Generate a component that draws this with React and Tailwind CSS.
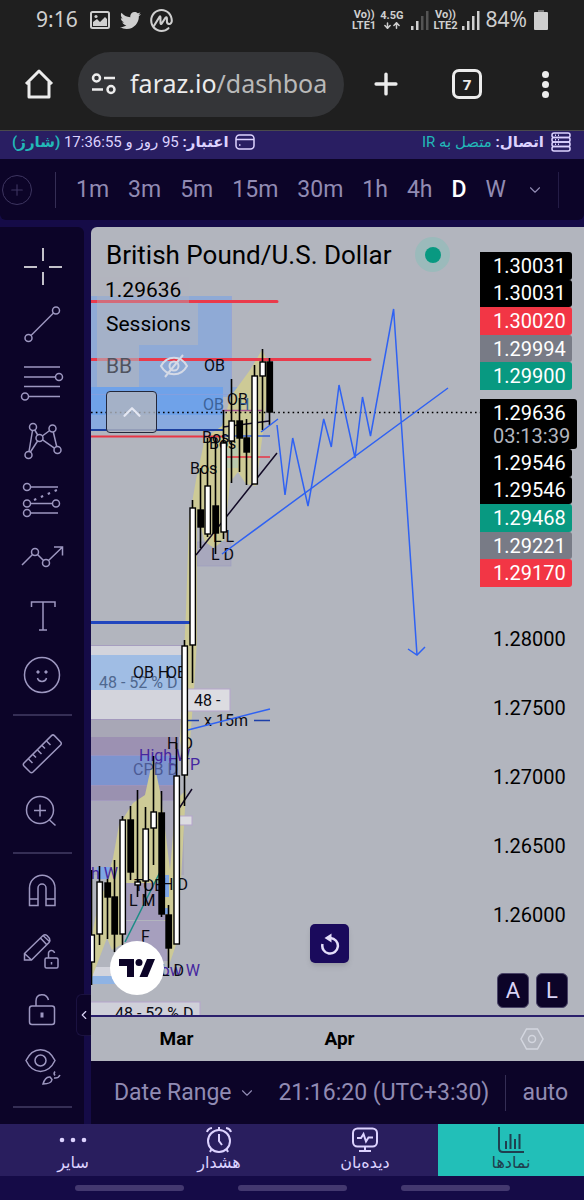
import {
  ArrowDown,
  ArrowUp,
  ChevronDown,
  ChevronLeft,
  ChevronUp,
  Plus,
} from "lucide-react";
import { FaTwitter } from "react-icons/fa";
import { SiCoinmarketcap } from "react-icons/si";

const intervals = ["1m", "3m", "5m", "15m", "30m", "1h", "4h", "D", "W"];

const upperLabels = [
  { price: "1.30031", color: "bg-black" },
  { price: "1.30031", color: "bg-black" },
  { price: "1.30020", color: "bg-[#f23645]" },
  { price: "1.29994", color: "bg-[#787b86]" },
  { price: "1.29900", color: "bg-[#089981]" },
];

const lowerLabels = [
  { price: "1.29546", color: "bg-black" },
  { price: "1.29546", color: "bg-black" },
  { price: "1.29468", color: "bg-[#089981]" },
  { price: "1.29221", color: "bg-[#787b86]" },
  { price: "1.29170", color: "bg-[#f23645]" },
];

const ticks = ["1.28000", "1.27500", "1.27000", "1.26500", "1.26000"];

// x, high, low, body top, body bottom, bullish
const candles = [
  [91, 870, 985, 935, 962, true],
  [99, 866, 945, 882, 934, true],
  [107, 879, 939, 883, 897, false],
  [114, 860, 952, 897, 934, false],
  [122, 816, 945, 820, 934, true],
  [130, 806, 880, 820, 872, false],
  [137, 790, 897, 882, 885, true],
  [145, 807, 906, 829, 881, true],
  [153, 756, 865, 812, 828, true],
  [161, 791, 917, 813, 914, false],
  [168, 905, 968, 915, 948, false],
  [176, 743, 944, 776, 944, true],
  [184, 640, 806, 646, 775, true],
  [192, 500, 683, 508, 645, true],
  [200, 468, 548, 510, 527, false],
  [207, 438, 537, 486, 534, true],
  [215, 438, 554, 506, 533, false],
  [223, 410, 539, 443, 532, true],
  [231, 379, 483, 421, 441, true],
  [239, 398, 472, 421, 438, false],
  [246, 419, 485, 438, 452, false],
  [254, 365, 484, 376, 484, true],
  [262, 349, 430, 362, 376, true],
  [269, 358, 425, 362, 412, false],
];

const zones = [
  { x: 91, y: 296, w: 140, h: 91, fill: "#8faad6" },
  { x: 91, y: 387, w: 157, h: 10, fill: "#8faad6" },
  { x: 91, y: 387, w: 132, h: 28, fill: "#6fa2e9" },
  { x: 91, y: 415, w: 132, h: 14, fill: "#88aadf" },
  { x: 91, y: 646, w: 91, h: 9, fill: "#d3d4dc" },
  { x: 91, y: 655, w: 91, h: 35, fill: "#a0bde4" },
  { x: 91, y: 690, w: 91, h: 29, fill: "#d3d4dc" },
  { x: 91, y: 719, w: 91, h: 18, fill: "#a8a7b6" },
  { x: 91, y: 737, w: 88, h: 18, fill: "#9c91b2" },
  { x: 91, y: 755, w: 87, h: 30, fill: "#7d94cf" },
  { x: 91, y: 785, w: 87, h: 15, fill: "#9a91b0" },
  { x: 91, y: 800, w: 93, h: 75, fill: "#aaa9ba" },
  { x: 97, y: 867, w: 19, h: 12, fill: "#7ea6e6" },
  { x: 91, y: 967, w: 30, h: 9, fill: "#d3d4dc" },
  { x: 91, y: 976, w: 30, h: 8, fill: "#8fb3e4" },
];

const notes = [
  { x: 204, y: 371, text: "OB" },
  { x: 203, y: 410, text: "OB", fill: "#3c6299" },
  { x: 227, y: 405, text: "OB" },
  { x: 238, y: 410, text: "H", fill: "#3c6299" },
  { x: 202, y: 443, text: "Bos" },
  { x: 209, y: 449, text: "Bos" },
  { x: 190, y: 474, text: "Bos" },
  { x: 213, y: 542, text: "L L" },
  { x: 211, y: 560, text: "L D" },
  { x: 99, y: 688, text: "48 - 52 % D", fill: "#4f688f" },
  { x: 133, y: 678, text: "OB H" },
  { x: 166, y: 678, text: "OE" },
  { x: 194, y: 706, text: "48 -" },
  { x: 204, y: 726, text: "x 15m" },
  { x: 167, y: 749, text: "H D" },
  { x: 139, y: 761, text: "High W", fill: "#4527a0" },
  { x: 168, y: 770, text: "F TP", fill: "#4527a0" },
  { x: 133, y: 775, text: "CPB D", fill: "#4c5a94" },
  { x: 91, y: 879, text: "h W", fill: "#4527a0" },
  { x: 134, y: 891, text: "TOB" },
  { x: 162, y: 890, text: "H D" },
  { x: 129, y: 906, text: "L M" },
  { x: 141, y: 942, text: "F" },
  { x: 152, y: 976, text: "Low W", fill: "#4527a0" },
  { x: 161, y: 976, text: "L D" },
  { x: 115, y: 1019, text: "48 - 52 % D" },
];

function Candle({ data }) {
  const [x, high, low, top, bottom, up] = data;
  return (
    <g stroke="#000">
      <path d={`M${x + 0.5} ${high}V${low}`} strokeWidth="1.6" />
      <rect
        x={x - 2}
        y={top}
        width="5.4"
        height={bottom - top}
        fill={up ? "#fff" : "#000"}
        strokeWidth="1.4"
      />
    </g>
  );
}

function Chart() {
  return (
    <svg
      viewBox="91 227 389 788"
      className="block w-full font-[Roboto,sans-serif]"
      role="img"
      aria-label="GBP/USD daily chart"
    >
      {zones.map((z, i) => (
        <rect key={i} x={z.x} y={z.y} width={z.w} height={z.h} fill={z.fill} />
      ))}
      <path
        d="M91 645.5h91M91 719.5h91M91 785.5h87M91 755.5h87M91 800.5h93"
        stroke="#a093c0"
        strokeWidth="0.7"
      />
      <rect x="197" y="542" width="34" height="24" fill="#a8a8bd" stroke="#9a9ac4" strokeWidth="0.6" />
      <path d="M91 394.5h158M231.5 296v90" stroke="#8c9ddb" strokeWidth="0.7" />

      {/* ranges behind the candles */}
      <g fill="#cdca96">
        <path d="M196 480L205 438L222 426L231 396L250 370L262 350L270 366L264 424L256 486L246 484L238 472L230 482L224 540L214 548L205 542L197 515L197 640L194 690L187 780L180 740L186 610L189 520Z" />
        <path d="M104 890L113 858L119 825L133 803L145 795L153 758L161 796L170 870L176 800L186 790L181 880L176 945L168 968L163 900L158 884L124 884L122 944L112 950L107 938L91 980V940L99 900Z" />
      </g>
      <path d="M224 448h14v20h-14z" fill="#b9c9ad" />
      <path d="M126 883h37l3 37h-40z" fill="#a199b9" />
      <path d="M126 921h40l2 40h-42z" fill="#a69fbe" />
      <path d="M160 875h9v22h-9zM163 908h6v6h-6z" fill="#7ea6e6" />
      <rect x="182" y="689" width="48" height="22" fill="#dcdce1" stroke="#b5a5cb" strokeWidth="1" />
      <rect x="178" y="816" width="14" height="9" fill="#dcdce1" stroke="#b5a5cb" strokeWidth="1" />
      <rect x="88" y="1002" width="112" height="16" fill="#cfd0d9" stroke="#b5a5cb" strokeWidth="1" />

      <g fill="none" strokeWidth="3" strokeLinecap="round">
        <path d="M91 301.5H277M91 359.5H370" stroke="#ea3a4b" />
        <path d="M91 622.5H189" stroke="#2146be" />
      </g>
      <path d="M91 430H223" stroke="#1c3f9e" strokeWidth="2" />
      <path d="M91 436.5H225" stroke="#e83545" strokeWidth="2" />
      <path d="M226 457H270" stroke="#e83545" strokeWidth="1.6" />
      <path d="M222 410.5h40" stroke="#a4558e" strokeWidth="1.4" />
      <path d="M222 436H270" stroke="#3560d8" strokeWidth="1.6" />
      <path d="M187 720.5h12M254 720.5h16" stroke="#1c3fa8" strokeWidth="1.6" />
      <path d="M91 412.5H480" stroke="#000" strokeWidth="1.6" strokeDasharray="1.6 3.2" />
      <path d="M196 555L277 453M178 810L192 789M223 427L269 421" stroke="#120a26" strokeWidth="1.5" />
      <path d="M125 942L160 872" stroke="#1c8d86" strokeWidth="1.5" />

      <g fontSize="16">
        {notes.map((n, i) => (
          <text key={i} x={n.x} y={n.y} fill={n.fill || "#0b0b12"}>
            {n.text}
          </text>
        ))}
      </g>

      {candles.map((c) => (
        <Candle key={c[0]} data={c} />
      ))}

      <g fill="none" stroke="#2f62f3" strokeWidth="1.5">
        <path d="M222 554L448 388M188 730L270 709M261 432L278 419" />
        <path d="M277 425L285 495L292.7 438L308 506L323.7 419L331.3 447L339 385L355 458L362.5 397L370.5 436L393.6 309L417 655" />
        <path d="M408 649L417 655L425 647" />
      </g>
    </svg>
  );
}

function PriceLabel({ price, color }) {
  return (
    <li className={`flex flex-1 items-center rounded-r-[3px] pl-[13px] text-white ${color}`}>
      {price}
    </li>
  );
}

function PriceScale() {
  return (
    <div className="flex w-[104px] shrink-0 flex-col pt-[25px] text-[20px] leading-none text-black">
      <ul className="mr-3 flex h-[138px] flex-col">
        {upperLabels.map((l, i) => (
          <PriceLabel key={i} {...l} />
        ))}
      </ul>
      <div className="mt-[9px] mr-[7px] flex h-[50px] flex-col justify-center gap-[3px] rounded-r-[3px] bg-black pl-[13px] text-white">
        <span>1.29636</span>
        <span className="text-[#b2b5be]">03:13:39</span>
      </div>
      <ul className="mr-3 flex h-[138px] flex-col">
        {lowerLabels.map((l, i) => (
          <PriceLabel key={i} {...l} />
        ))}
      </ul>
      <ul className="mt-[17px]">
        {ticks.map((t) => (
          <li key={t} className="flex h-[69px] items-center pl-[13px]">
            {t}
          </li>
        ))}
      </ul>
      <div className="mt-6 flex gap-[7px] pl-[17px]">
        {["A", "L"].map((k) => (
          <button
            key={k}
            className="h-[35px] w-8 rounded-md border border-[#4a4468] bg-[#0c0428] text-[22px] leading-none text-[#d9d3f5]"
          >
            {k}
          </button>
        ))}
      </div>
    </div>
  );
}

function Legend() {
  return (
    <div className="absolute top-0 left-0 flex w-full flex-col items-start pl-[6px] text-[21px] text-black">
      <div className="flex items-center gap-6 pt-[10px] pl-[9px]">
        <h1 className="text-[26px] leading-[34px] whitespace-nowrap">British Pound/U.S. Dollar</h1>
        <span className="flex size-[35px] items-center justify-center rounded-full bg-[#9bbabb]">
          <span className="size-4 rounded-full bg-[#089981]" />
        </span>
      </div>
      <div className="mt-[5px] bg-[#b2b5be]/40 pr-2 pl-[8px] leading-[26px]">1.29636</div>
      <div className="bg-[#b2b5be]/60 pr-[7px] pl-[9px] leading-[42px]">Sessions</div>
      <div className="flex items-center">
        <span className="bg-[#b2b5be]/60 pr-[7px] pl-[9px] leading-[42px] text-[#50535e]">BB</span>
        <button aria-label="Show BB" className="ml-5 text-[#d5dae6]">
          <svg width="30" height="26" viewBox="0 0 30 26" fill="none" stroke="currentColor" strokeWidth="2">
            <path d="M2 13C8 2 22 2 28 13C22 24 8 24 2 13Z" />
            <circle cx="15" cy="13" r="4.5" />
            <path d="M24 2L6 24" />
          </svg>
        </button>
      </div>
      <button
        aria-label="Collapse legend"
        className="mt-[4px] ml-[9px] flex h-[42px] w-[51px] items-center justify-center rounded-[4px] border border-[#23273a] bg-[#b2b5be]/80 text-[#e4e7f2]"
      >
        <ChevronUp size={30} strokeWidth={1.8} />
      </button>
    </div>
  );
}

function ToolButton({ label, children }) {
  return (
    <button aria-label={label} className="flex h-[58px] w-full items-center justify-center">
      <svg
        width="44"
        height="44"
        viewBox="0 0 44 44"
        fill="none"
        stroke="currentColor"
        strokeWidth="1.5"
        className="overflow-visible"
      >
        {children}
      </svg>
    </button>
  );
}

function Divider() {
  return <div className="mx-auto mt-3 mb-2 h-[2px] w-[59px] bg-[#352e55]" />;
}

function Sidebar() {
  return (
    <aside className="relative w-[84px] shrink-0 rounded-tr-md bg-[#0c0428] pt-[11px] pb-2 text-[#9d97c0]">
      <ToolButton label="Cross">
        <path d="M4 22h13M29 22h13M23 3v13M23 27v13" stroke="#fff" />
      </ToolButton>
      <ToolButton label="Trend line">
        <circle cx="8.5" cy="35" r="3.5" />
        <circle cx="36" cy="7.5" r="3.5" />
        <path d="M11 32.5L33.5 10" />
      </ToolButton>
      <ToolButton label="Fib retracement">
        <path d="M4 6H40M4 16H35.500M4 25.500H40M8.500 35.500H40" />
        <circle cx="39" cy="16" r="3.5" />
        <circle cx="5" cy="35.5" r="3.5" />
      </ToolButton>
      <ToolButton label="Patterns">
        <circle cx="13" cy="8" r="3.5" />
        <circle cx="32.5" cy="9.5" r="3.5" />
        <circle cx="19.5" cy="19" r="3.5" />
        <circle cx="8.5" cy="36" r="3.5" />
        <circle cx="37.5" cy="31" r="3.5" />
        <path d="M12.500 11.500L9 32.500M14.800 11L17.700 16M17.600 22L10.400 33M22.300 17L29.700 11.500M33.300 13L36.700 27.500M22.600 20.800L34.400 29.200" />
      </ToolButton>
      <ToolButton label="Forecasting">
        <circle cx="7" cy="10" r="3.5" />
        <circle cx="7" cy="26.5" r="3.5" />
        <circle cx="36" cy="26.5" r="3.5" />
        <circle cx="7" cy="36" r="3.5" />
        <path d="M10.500 10H38M10.500 26.500H32.500M10.500 36H38" />
        <path d="M14 23L38 12.500" strokeDasharray="2.500 5" strokeWidth="2" />
      </ToolButton>
      <ToolButton label="Waves">
        <circle cx="15" cy="17" r="3.5" />
        <circle cx="26" cy="28" r="3.5" />
        <path d="M2 30L12.500 19.500M17.500 19.500L23.500 25.500M28.500 25.500L42 12.500M34 12h8.500v8.500" />
      </ToolButton>
      <ToolButton label="Text">
        <path d="M11.500 14V9H35V14M23 9V37M19 37h8" />
      </ToolButton>
      <ToolButton label="Icons">
        <circle cx="22" cy="24" r="17.5" />
        <circle cx="18" cy="21" r="1.2" fill="currentColor" strokeWidth="1" />
        <circle cx="26" cy="21" r="1.2" fill="currentColor" strokeWidth="1" />
        <path d="M17.500 27c1 4.500 8 4.500 9 0" />
      </ToolButton>
      <Divider />
      <ToolButton label="Measure">
        <path d="M31.500 4.600Q33 3.200 34.400 4.600L40.600 11Q42 12.500 40.600 14L13 41Q11.500 42.400 10 41L4 35Q2.600 33.500 4 32Z" />
        <path d="M8.500 28l4 4M13 23.500l3 3M17.500 19l4 4M22 14.500l3 3M26.500 10l4 4" />
      </ToolButton>
      <ToolButton label="Zoom in">
        <circle cx="20" cy="21" r="13.5" />
        <path d="M29.500 31L35.500 36.500M14 21.500h12M20 15.500v12" />
      </ToolButton>
      <Divider />
      <ToolButton label="Magnet">
        <path d="M9.500 36.500V19a12.750 12.750 0 0 1 25.500 0V36.500H26V19a4 4 0 0 0-8 0V36.500ZM9.500 30H18M26 30h9" />
      </ToolButton>
      <ToolButton label="Lock drawing mode">
        <path d="M4.500 33V26.500L23 8.500Q25 7 27 8.500L29.500 11.500Q30.500 13.500 29 15.500L11.500 33ZM4.500 26.500L11.500 33M20.500 11l6.500 7M23 8.500l6.500 6" />
        <rect x="25" y="31" width="13" height="10" rx="1.5" />
        <path d="M28.500 31v-4a3 3 0 0 1 6-1M31.500 35v2.500" />
      </ToolButton>
      <ToolButton label="Lock all drawings">
        <rect x="9.5" y="21" width="25" height="18.500" rx="2.500" />
        <path d="M16 21V16c0-8 10.500-8.500 12.500-1" />
        <path d="M22 27.500v5" strokeWidth="3" />
      </ToolButton>
      <ToolButton label="Hide all drawings">
        <path d="M6 17.500C13 3 28 3 35 17.500C28 32 13 32 6 17.500Z" />
        <circle cx="20.5" cy="17.500" r="5.500" />
        <path d="M23 41c1.500-5 4-7.500 7-7l2 2.500c-.5 3.500-4 4.500-9 4.500ZM35 32.500a3 3 0 0 1 0-4M34 35c3 .5 5-1 6-3" />
      </ToolButton>
      <Divider />
      <button
        aria-label="Hide toolbar"
        className="absolute -right-[7px] bottom-[88px] flex h-[42px] w-[15px] items-center justify-center rounded-l-md border border-r-0 border-[#1b1240] bg-[#0c0428] text-[#d9d3f5]"
      >
        <ChevronLeft size={14} className="shrink-0" />
      </button>
    </aside>
  );
}

function Signal({ weak }) {
  return (
    <svg width="18" height="20" viewBox="0 0 18 20" fill="#d0d0d0">
      <path d="M0 16h2.500v4H0zM5 11h2.500v9H5z" />
      <path d="M10 6h2.500v14H10zM15 1h2.500v19H15z" opacity={weak ? 0.3 : 1} />
    </svg>
  );
}

function StatusBar() {
  return (
    <div className="flex h-10 items-center pr-9 pl-9 font-['Noto_Sans',sans-serif] text-[#cfcfcf]">
      <span className="text-[21px]">9:16</span>
      <svg width="20" height="18" viewBox="0 0 20 18" className="ml-3 shrink-0">
        <rect x="1" y="1" width="18" height="16" rx="1.500" fill="none" stroke="currentColor" strokeWidth="2" />
        <circle cx="6" cy="5.500" r="1.600" fill="currentColor" />
        <path d="M3 15V11L7 8L10 11L15 6L17 8V15Z" fill="currentColor" />
      </svg>
      <FaTwitter size={21} className="ml-[10px] shrink-0" />
      <SiCoinmarketcap size={23} className="ml-[9px] shrink-0" />
      <div className="ml-auto flex items-center gap-1 font-[Roboto,sans-serif] text-[11px] leading-[11px] font-bold whitespace-nowrap">
        <span className="text-center">
          Vo))
          <br />
          LTE1
        </span>
        <span className="flex flex-col items-center">
          4.5G
          <span className="flex">
            <ArrowDown size={9} strokeWidth={4} />
            <ArrowUp size={9} strokeWidth={4} />
          </span>
        </span>
        <span className="ml-1">
          <Signal weak />
        </span>
        <span className="text-center">
          Vo))
          <br />
          LTE2
        </span>
        <Signal />
      </div>
      <span className="ml-[6px] text-[21px]">84%</span>
      <svg width="14" height="20" viewBox="0 0 14 20" className="ml-[7px] shrink-0">
        <path d="M4 0h6v3H4z" fill="#777" />
        <rect y="2" width="14" height="18" rx="1" fill="#cfcfcf" />
      </svg>
    </div>
  );
}

function BrowserBar() {
  return (
    <div className="flex h-[91px] items-center border-b border-[#4a4a4c] pt-[2px] pr-[35px] pb-[4px] pl-[23px] font-['Noto_Sans',sans-serif] text-[#ececec]">
      <button aria-label="Home">
        <svg width="32" height="32" viewBox="0 0 32 32" fill="none" stroke="currentColor" strokeWidth="3" strokeLinejoin="round">
          <path d="M3 16L16 3L29 16M6 14V29H26V14" />
        </svg>
      </button>
      <button className="ml-[23px] flex h-[65px] min-w-0 flex-1 items-center gap-[13px] overflow-hidden rounded-full bg-[#343538] pl-[13px] text-[25px] whitespace-nowrap">
        <svg width="26" height="22" viewBox="0 0 26 22" fill="none" stroke="currentColor" strokeWidth="2.500" className="shrink-0">
          <circle cx="5.500" cy="5" r="3.500" />
          <path d="M13 5h11M1 16.500h11" />
          <circle cx="20" cy="16.500" r="3.500" />
        </svg>
        <span>
          faraz.io<span className="text-[#b9b9b9]">/dashboa</span>
        </span>
      </button>
      <button aria-label="New tab" className="ml-[25px]">
        <Plus size={34} strokeWidth={2.4} />
      </button>
      <button className="ml-[49px] flex size-[30px] items-center justify-center rounded-[7px] border-[3px] border-[#ececec] text-[15px] leading-none font-bold">
        7
      </button>
      <button aria-label="More" className="ml-[60px] flex flex-col gap-[3px]">
        <span className="size-[7px] rounded-full bg-[#ececec]" />
        <span className="size-[7px] rounded-full bg-[#ececec]" />
        <span className="size-[7px] rounded-full bg-[#ececec]" />
      </button>
    </div>
  );
}

function InfoBar() {
  return (
    <div
      dir="rtl"
      className="flex h-7 items-center justify-between bg-[#291e62] pr-[13px] pb-[6px] pl-3 text-[15px] leading-none whitespace-nowrap text-[#ddd3ff]"
    >
      <div className="flex items-center gap-[7px]">
        <svg width="20" height="20" viewBox="0 0 20 20" fill="none" stroke="currentColor" strokeWidth="1.500">
          <rect x="1" y="1" width="18" height="4.500" rx="2" />
          <rect x="1" y="5.500" width="18" height="4.500" rx="2" />
          <rect x="1" y="10" width="18" height="4.500" rx="2" />
          <rect x="1" y="14.500" width="18" height="4.500" rx="2" />
          <path d="M4 3.300h1M7 3.300h1M4 7.800h1M7 7.800h1M4 12.300h1M7 12.300h1" />
        </svg>
        <span>
          <b>اتصال:</b> <span className="text-[#22b8b8]">متصل به IR</span>
        </span>
      </div>
      <div className="flex items-center gap-[6px]">
        <svg width="20" height="16" viewBox="0 0 20 16" fill="none" stroke="currentColor" strokeWidth="1.500">
          <rect x="1" y="1" width="18" height="14" rx="3.500" />
          <path d="M1 5.500h18M4 11h1.500" />
        </svg>
        <span>
          <b>اعتبار:</b> 95 روز و 17:36:55{" "}
          <a href="#charge" className="font-bold text-[#22b8b8]">
            (شارژ)
          </a>
        </span>
      </div>
    </div>
  );
}

function IntervalBar() {
  return (
    <div className="flex h-[61px] items-center overflow-hidden rounded-b-md bg-[#0c0428] pl-[2px] text-[23px] leading-none text-[#918bb3]">
      <button aria-label="Compare" className="flex size-[30px] shrink-0 items-center justify-center rounded-full border border-[#3d3560] text-[#3d3560]">
        <Plus size={18} strokeWidth={1.5} />
      </button>
      <div className="mr-5 ml-[23px] h-9 w-px shrink-0 bg-[#352e55]" />
      <div className="flex flex-1 justify-between">
        {intervals.map((i) => (
          <button key={i} className={i === "D" ? "font-medium text-white" : ""}>
            {i}
          </button>
        ))}
      </div>
      <button aria-label="More intervals" className="ml-[20px]">
        <ChevronDown size={18} strokeWidth={1.5} />
      </button>
      <div className="mr-[25px] ml-[14px] h-9 w-px shrink-0 bg-[#241c46]" />
    </div>
  );
}

function ChartPanel() {
  return (
    <main className="flex min-w-0 flex-1 flex-col">
      <div className="flex rounded-tl-md bg-[#b2b5be]">
        <div className="relative min-w-0 flex-1">
          <Chart />
          <Legend />
          <a
            href="#tradingview"
            aria-label="TradingView"
            className="absolute bottom-[20px] left-[19px] flex size-[54px] items-center justify-center rounded-full bg-white"
          >
            <svg width="36" height="18" viewBox="0 0 36 18" fill="#0c0428">
              <path d="M0 0H15V18H8V7H0Z" />
              <circle cx="20" cy="3.500" r="3.500" />
              <path d="M28 0H36L28.500 18H20.500Z" />
            </svg>
          </a>
          <button
            aria-label="Reset chart"
            className="absolute bottom-[52px] left-[219px] flex size-[39px] items-center justify-center rounded-[5px] bg-[#1a0a5c] text-[#e4defa] shadow-md"
          >
            <svg width="20" height="22" viewBox="0 0 20 22" fill="none" stroke="currentColor" strokeWidth="2.500">
              <path d="M2.500 11A7.800 7.800 0 1 0 10.500 5" />
              <path d="M11.500 0.500V9.500L4.500 5Z" fill="currentColor" stroke="none" />
            </svg>
          </button>
        </div>
        <PriceScale />
      </div>
      <div className="flex h-[46px] items-center border-t-2 border-[#2a1f6b] bg-[#b2b5be] text-[19px] font-bold text-black">
        <div className="flex flex-1 pl-[4px]">
          <span className="w-[163px] text-center">Mar</span>
          <span className="w-[163px] text-center">Apr</span>
        </div>
        <button aria-label="Scale settings" className="flex w-[104px] justify-center text-[#d3d6df]">
          <svg width="24" height="22" viewBox="0 0 24 22" fill="none" stroke="currentColor" strokeWidth="1.500">
            <path d="M6.500 1H17.500L23 11L17.500 21H6.500L1 11Z" />
            <circle cx="12" cy="11" r="3.500" />
          </svg>
        </button>
      </div>
      <div className="flex flex-1 items-center bg-[#0c0428] pr-[16px] pl-[23px] text-[23px] leading-none whitespace-nowrap text-[#918bb3]">
        <button className="flex items-center gap-[6px]">
          Date Range
          <ChevronDown size={18} strokeWidth={1.5} />
        </button>
        <button className="ml-auto">21:16:20 (UTC+3:30)</button>
        <div className="mx-[16px] h-9 w-px bg-[#352e55]" />
        <button>auto</button>
      </div>
    </main>
  );
}

const navItems = [
  {
    label: "نمادها",
    active: true,
    icon: (
      <path d="M1 0V21Q1 25 5 25H26M8 22V14M12.500 22V7M17 22V12M21.500 22V7" />
    ),
  },
  {
    label: "دیده‌بان",
    icon: (
      <>
        <rect x="1" y="1.500" width="24" height="18" rx="4.500" />
        <path d="M13 19.500V24M7 24H19M5 11H9L11.500 7L14 14.500L16.500 10.500H21" />
      </>
    ),
  },
  {
    label: "هشدار",
    icon: (
      <>
        <circle cx="13" cy="14" r="11" />
        <path d="M13 7V14L16 18M1 5Q2 1.500 6 1M20 1Q24 1.500 25 5M5.500 22L4 25M20.500 22L22 25M13 0V3" />
      </>
    ),
  },
  {
    label: "سایر",
    icon: (
      <g fill="currentColor" stroke="none">
        <circle cx="2" cy="13" r="2.300" />
        <circle cx="13" cy="13" r="2.300" />
        <circle cx="24" cy="13" r="2.300" />
      </g>
    ),
  },
];

function BottomNav() {
  return (
    <nav dir="rtl" className="grid h-[52px] grid-cols-4 bg-[#291e5e] text-[16px] leading-none">
      {navItems.map((item) => (
        <a
          key={item.label}
          href="#nav"
          className={`flex flex-col items-center gap-[2px] pt-[3px] ${
            item.active ? "bg-[#22bfb8] text-[#1f3f4f]" : "text-[#ddd3ff]"
          }`}
        >
          <svg width="26" height="26" viewBox="0 0 26 26" fill="none" stroke="currentColor" strokeWidth="2" className="shrink-0 overflow-visible">
            {item.icon}
          </svg>
          {item.label}
        </a>
      ))}
    </nav>
  );
}

export default function App() {
  return (
    <div className="flex flex-col bg-[#150b47] font-[Roboto,'DejaVu_Sans',sans-serif]">
      <header className="bg-[#1f1f1f]">
        <StatusBar />
        <BrowserBar />
      </header>
      <InfoBar />
      <IntervalBar />
      <div className="mt-[7px] flex gap-[7px]">
        <Sidebar />
        <ChartPanel />
      </div>
      <BottomNav />
      <div className="flex h-6 items-center justify-center gap-[54px]">
        <span className="h-[6px] w-[109px] rounded-full bg-[#43386f]" />
        <span className="h-[6px] w-[109px] rounded-full bg-[#43386f]" />
        <span className="h-[6px] w-[109px] rounded-full bg-[#43386f]" />
      </div>
    </div>
  );
}
